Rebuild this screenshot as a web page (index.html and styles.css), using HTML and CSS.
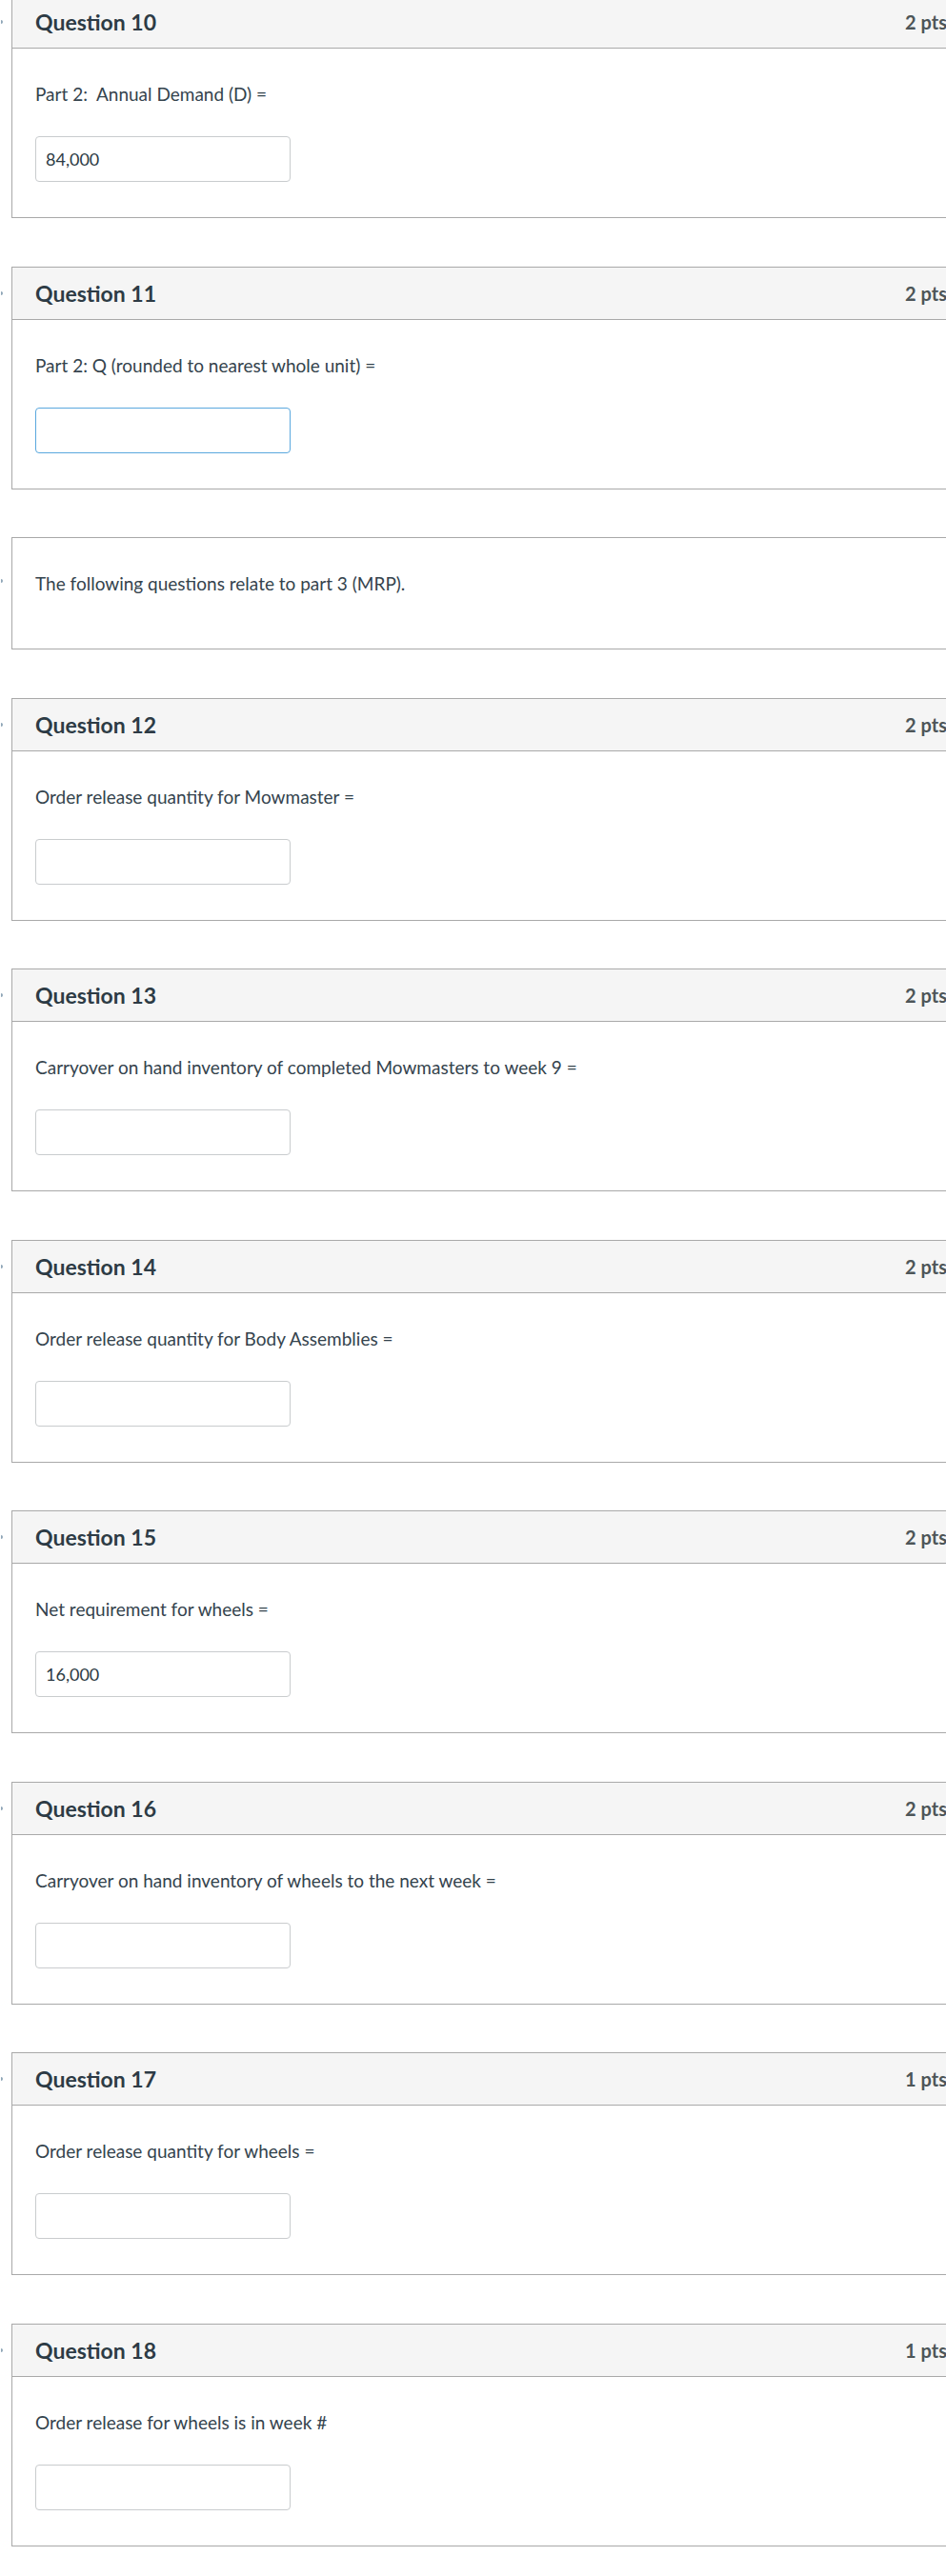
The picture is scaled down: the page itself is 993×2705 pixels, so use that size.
FILE: index.html
```html
<!DOCTYPE html>
<html lang="en">
<head>
    <meta charset="UTF-8">
    <meta name="viewport" content="width=device-width, initial-scale=1.0">
    <title>Quiz</title>
    <link rel="stylesheet" href="styles.css">
</head>
<body>
    <div class="quiz">
        <div class="question">
            <span class="flag"></span>
            <div class="question-header">
                <span class="question-name">Question 10</span>
                <span class="question-points">2 pts</span>
            </div>
            <div class="question-body">
                <p>Part 2:&nbsp; Annual Demand (D) =</p>
                <input class="answer" type="text" value="84,000">
            </div>
        </div>

        <div class="question">
            <span class="flag"></span>
            <div class="question-header">
                <span class="question-name">Question 11</span>
                <span class="question-points">2 pts</span>
            </div>
            <div class="question-body">
                <p>Part 2: Q (rounded to nearest whole unit) =</p>
                <input class="answer focused" type="text" value="">
            </div>
        </div>

        <div class="question text-only">
            <span class="flag"></span>
            <div class="question-body">
                <p>The following questions relate to part 3 (MRP).</p>
            </div>
        </div>

        <div class="question">
            <span class="flag"></span>
            <div class="question-header">
                <span class="question-name">Question 12</span>
                <span class="question-points">2 pts</span>
            </div>
            <div class="question-body">
                <p>Order release quantity for Mowmaster =</p>
                <input class="answer" type="text" value="">
            </div>
        </div>

        <div class="question">
            <span class="flag"></span>
            <div class="question-header">
                <span class="question-name">Question 13</span>
                <span class="question-points">2 pts</span>
            </div>
            <div class="question-body">
                <p>Carryover on hand inventory of completed Mowmasters to week 9 =</p>
                <input class="answer" type="text" value="">
            </div>
        </div>

        <div class="question">
            <span class="flag"></span>
            <div class="question-header">
                <span class="question-name">Question 14</span>
                <span class="question-points">2 pts</span>
            </div>
            <div class="question-body">
                <p>Order release quantity for Body Assemblies =</p>
                <input class="answer" type="text" value="">
            </div>
        </div>

        <div class="question">
            <span class="flag"></span>
            <div class="question-header">
                <span class="question-name">Question 15</span>
                <span class="question-points">2 pts</span>
            </div>
            <div class="question-body">
                <p>Net requirement for wheels =</p>
                <input class="answer" type="text" value="16,000">
            </div>
        </div>

        <div class="question">
            <span class="flag"></span>
            <div class="question-header">
                <span class="question-name">Question 16</span>
                <span class="question-points">2 pts</span>
            </div>
            <div class="question-body">
                <p>Carryover on hand inventory of wheels to the next week =</p>
                <input class="answer" type="text" value="">
            </div>
        </div>

        <div class="question">
            <span class="flag"></span>
            <div class="question-header">
                <span class="question-name">Question 17</span>
                <span class="question-points">1 pts</span>
            </div>
            <div class="question-body">
                <p>Order release quantity for wheels =</p>
                <input class="answer" type="text" value="">
            </div>
        </div>

        <div class="question">
            <span class="flag"></span>
            <div class="question-header">
                <span class="question-name">Question 18</span>
                <span class="question-points">1 pts</span>
            </div>
            <div class="question-body">
                <p>Order release for wheels is in week #</p>
                <input class="answer" type="text" value="">
            </div>
        </div>
    </div>
</body>
</html>
```

FILE: styles.css
```css
* {
    margin: 0;
    padding: 0;
    box-sizing: border-box;
}

html, body {
    overflow: hidden;
}

body {
    background: #ffffff;
    font-family: Lato, "Open Sans", sans-serif;
    color: #2d3b45;
    width: 993px;
    height: 2705px;
}

.quiz {
    margin-top: -5px;
    padding-left: 12px;
}

.question {
    position: relative;
    width: 1010px;
    border: 1px solid #a9a9a9;
    margin-bottom: 50.5px;
    background: #ffffff;
}

/* little piece of the flag icon sticking out on the left */
.flag {
    position: absolute;
    left: -12px;
    top: 25px;
    width: 2px;
    height: 4px;
    border-radius: 0 2px 2px 0;
    background: #8fa6b8;
}

.text-only .flag {
    top: 43px;
}

.question-header {
    display: flex;
    justify-content: space-between;
    align-items: center;
    height: 55px;
    padding: 0 27px 0 24px;
    background: #f5f5f5;
    border-bottom: 1px solid #a9a9a9;
}

.question-name {
    font-size: 23px;
    font-weight: bold;
    color: #2d3b45;
}

.question-points {
    font-size: 20px;
    font-weight: bold;
    color: #4d5558;
}

.question-body {
    padding: 34px 24px 37px;
}

.question-body p {
    font-size: 19px;
    line-height: 28px;
    margin-bottom: 30px;
    color: #34434d;
}

.text-only .question-body {
    padding-bottom: 54px;
}

.text-only .question-body p {
    margin-bottom: 0;
}

.answer {
    display: block;
    width: 268px;
    height: 48px;
    padding: 0 10px;
    border: 1px solid #c9ccce;
    border-radius: 4px;
    font-family: Lato, "Open Sans", sans-serif;
    font-size: 18px;
    color: #2d3b45;
    background: #ffffff;
    outline: none;
}

.answer.focused {
    border-color: #5aa8de;
}
```
